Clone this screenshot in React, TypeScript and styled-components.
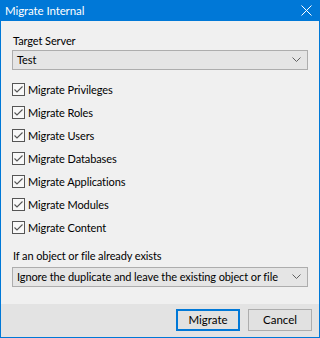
import styled, { createGlobalStyle } from "styled-components";

const Global = createGlobalStyle`
  html, body {
    margin: 0;
    padding: 0;
    background: #f0f0f0;
  }
  * {
    box-sizing: border-box;
  }
`;

const Window = styled.div`
  width: 320px;
  height: 338px;
  display: flex;
  flex-direction: column;
  background: #f0f0f0;
  border: 1px solid #0078d7;
  border-top: none;
  font-family: Lato, "Segoe UI", sans-serif;
  font-size: 11px;
  letter-spacing: -0.1px;
  color: #000;
  white-space: nowrap;
`;

const TitleBar = styled.div`
  height: 21px;
  margin: 0 -1px;
  background: #0078d7;
  color: #fff;
  display: flex;
  align-items: center;
  justify-content: space-between;
  padding: 0 8px 0 5px;
  font-size: 11.5px;
`;

const Close = styled.span`
  display: flex;
  align-items: center;
`;

const Body = styled.div`
  flex: 1;
  padding: 0 11px;
  display: flex;
  flex-direction: column;
`;

const Label = styled.div<{ $top: number }>`
  margin-top: ${({ $top }) => $top}px;
  line-height: 16px;
  height: 16px;
  padding-left: 1px;
`;

const Select = styled.div<{ $top: number }>`
  margin-top: ${({ $top }) => $top}px;
  height: 20px;
  border: 1px solid #adadad;
  background: #e5e5e5;
  display: flex;
  align-items: center;
  justify-content: space-between;
  padding: 0 6px 0 4px;
  line-height: 16px;
`;

const List = styled.div`
  margin-top: 8px;
  display: flex;
  flex-direction: column;
`;

const Row = styled.label`
  height: 23px;
  display: flex;
  align-items: center;
  gap: 3px;
`;

const Box = styled.span`
  width: 13px;
  height: 13px;
  border: 1px solid #555;
  background: #f8f8f8;
  display: flex;
  align-items: center;
  justify-content: center;
`;

const Footer = styled.div`
  height: 33px;
  background: #e3e3e3;
  display: flex;
  align-items: center;
  justify-content: flex-end;
  gap: 8px;
  padding: 0 7px 2px 0;
`;

const Button = styled.button<{ $default?: boolean }>`
  width: 64px;
  height: 22px;
  font: inherit;
  font-size: 11.5px;
  color: #000;
  background: #e1e1e1;
  border: 1px solid ${({ $default }) => ($default ? "#0078d7" : "#adadad")};
  box-shadow: ${({ $default }) => ($default ? "inset 0 0 0 1px #0078d7" : "none")};
  padding: 0;
`;

const Chevron = () => (
  <svg width="9" height="6" viewBox="0 0 9 6">
    <path d="M0.5 0.5 L4.5 4.5 L8.5 0.5" fill="none" stroke="#606060" strokeWidth="1" />
  </svg>
);

const items = [
  "Migrate Privileges",
  "Migrate Roles",
  "Migrate Users",
  "Migrate Databases",
  "Migrate Applications",
  "Migrate Modules",
  "Migrate Content",
];

export default function App() {
  return (
    <Window>
      <Global />
      <TitleBar>
        <span>Migrate Internal</span>
        <Close>
          <svg width="11" height="11" viewBox="0 0 11 11">
            <path d="M0.5 0.5 L10.5 10.5 M10.5 0.5 L0.5 10.5" stroke="#fff" strokeWidth="1" />
          </svg>
        </Close>
      </TitleBar>
      <Body>
        <Label $top={12}>Target Server</Label>
        <Select $top={1}>
          <span>Test</span>
          <Chevron />
        </Select>
        <List>
          {items.map((t) => (
            <Row key={t}>
              <Box>
                <svg width="11" height="11" viewBox="0 0 11 11">
                  <path d="M1.5 5.5 L4 8 L9.5 2.5" fill="none" stroke="#555" strokeWidth="1.1" />
                </svg>
              </Box>
              {t}
            </Row>
          ))}
        </List>
        <Label $top={9}>If an object or file already exists</Label>
        <Select $top={3}>
          <span>Ignore the duplicate and leave the existing object or file</span>
          <Chevron />
        </Select>
      </Body>
      <Footer>
        <Button $default>Migrate</Button>
        <Button>Cancel</Button>
      </Footer>
    </Window>
  );
}
